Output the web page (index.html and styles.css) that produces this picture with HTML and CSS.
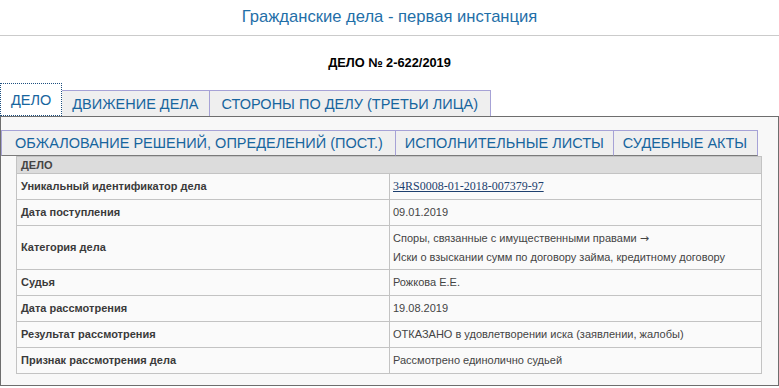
FILE: index.html
```html
<!DOCTYPE html>
<html lang="ru">
<head>
<meta charset="utf-8">
<title>Гражданские дела - первая инстанция</title>
<link rel="stylesheet" href="styles.css">
</head>
<body>
<header class="page-head">
  <h1 class="page-title">Гражданские дела - первая инстанция</h1>
</header>
<div class="case-num">ДЕЛО № 2-622/2019</div>
<nav class="tabs-top">
  <div class="tab tab-active">ДЕЛО</div>
  <div class="tab">ДВИЖЕНИЕ ДЕЛА</div>
  <div class="tab tab-wide">СТОРОНЫ ПО ДЕЛУ (ТРЕТЬИ ЛИЦА)</div>
</nav>
<section class="panel">
  <nav class="tabs-sub">
    <div class="stab stab-1">ОБЖАЛОВАНИЕ РЕШЕНИЙ, ОПРЕДЕЛЕНИЙ (ПОСТ.)</div>
    <div class="stab">ИСПОЛНИТЕЛЬНЫЕ ЛИСТЫ</div>
    <div class="stab stab-3">СУДЕБНЫЕ АКТЫ</div>
  </nav>
  <table class="case-table">
    <tr><th colspan="2" class="sect">ДЕЛО</th></tr>
    <tr><td class="lbl">Уникальный идентификатор дела</td><td class="val"><a class="uid" href="#">34RS0008-01-2018-007379-97</a></td></tr>
    <tr><td class="lbl">Дата поступления</td><td class="val">09.01.2019</td></tr>
    <tr><td class="lbl">Категория дела</td><td class="val val-multi">Споры, связанные с имущественными правами <span class="arrow">→</span><br>Иски о взыскании сумм по договору займа, кредитному договору</td></tr>
    <tr><td class="lbl">Судья</td><td class="val">Рожкова Е.Е.</td></tr>
    <tr><td class="lbl">Дата рассмотрения</td><td class="val">19.08.2019</td></tr>
    <tr><td class="lbl">Результат рассмотрения</td><td class="val">ОТКАЗАНО в удовлетворении иска (заявлении, жалобы)</td></tr>
    <tr><td class="lbl">Признак рассмотрения дела</td><td class="val">Рассмотрено единолично судьей</td></tr>
  </table>
</section>
</body>
</html>
```
FILE: styles.css
```css
html, body {
  margin: 0;
  padding: 0;
  background: #fff;
  font-family: "Liberation Sans", Arial, sans-serif;
  color: #333;
}
.page-head {
  height: 35px;
  border-bottom: 1px solid #cbcbcb;
  display: flex;
  align-items: center;
  justify-content: center;
}
.page-title {
  margin: 0;
  font-weight: normal;
  font-size: 16.6px;
  color: #1f6fa8;
  line-height: 20px;
  padding-bottom: 1px;
}
.case-num {
  text-align: center;
  font-weight: bold;
  font-size: 12.8px;
  color: #000;
  line-height: 14px;
  padding-top: 20px;
  height: 27px;
}
.tabs-top {
  display: flex;
  align-items: flex-end;
  height: 33px;
}
.tab {
  box-sizing: border-box;
  height: 26px;
  padding: 0 10px;
  font-size: 14.5px;
  line-height: 26px;
  color: #17659e;
  background: #efefef;
  border: 1px solid #a6a2d6;
  border-bottom: none;
  border-left: none;
}
.tab-wide { padding: 0 12px; }
.tab-active {
  height: 33px;
  line-height: 33px;
  background: #fff;
  border: 1px dotted #1d4f80;
  padding: 0 10px;
}
.panel {
  border: 1px solid #6e6e6e;
  background: #f8f8f8;
  padding: 13px 0 15px;
  height: 240px;
}
.tabs-sub {
  display: flex;
  height: 26px;
}
.stab {
  box-sizing: border-box;
  height: 26px;
  padding: 0 9px;
  font-size: 14.5px;
  line-height: 25px;
  color: #17659e;
  background: #efefef;
  border: 1px solid #a6a2d6;
  border-left: none;
  border-bottom: 1px solid #7a7a7a;
}
.stab-1 {
  border-left: 1px solid #a6a2d6;
  padding: 0 12px 0 13px;
}
.stab-3 {
  padding: 0 10px 0 9px;
}
.case-table {
  margin-left: 15px;
  width: 746px;
  border-collapse: collapse;
  font-size: 11px;
  background: #fafafa;
}
.case-table th, .case-table td {
  border: 1px solid #c3c3c3;
  padding: 6px 4px;
  line-height: 13px;
  text-align: left;
  vertical-align: middle;
}
.case-table .sect {
  background: #dcdcdc;
  font-weight: bold;
  color: #444;
  padding: 2px 4px;
  line-height: 12px;
}
.lbl {
  width: 364px;
  font-weight: bold;
  color: #3a3a3a;
}
.val {
  color: #444;
  padding-left: 3px !important;
}
.val-multi {
  line-height: 18px !important;
  padding: 3px 4px 3px 3px !important;
}
.arrow {
  font-family: "DejaVu Sans", sans-serif;
  font-size: 11px;
}
.uid {
  font-family: "Liberation Serif", "Times New Roman", serif;
  font-size: 12px;
  color: #1d3f6e;
  text-decoration: underline;
}
```
